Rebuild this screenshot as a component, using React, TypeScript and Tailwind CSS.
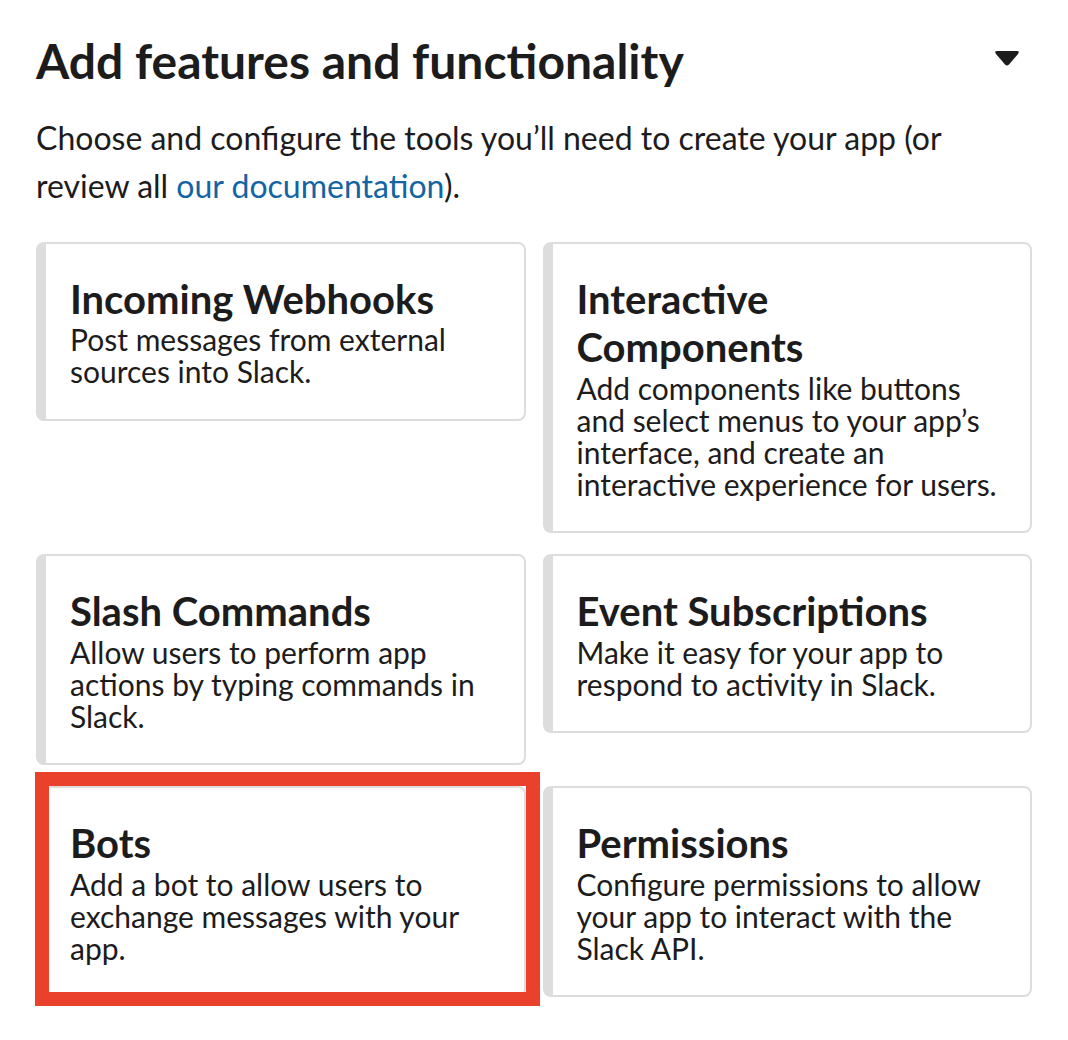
import React from "react";

type Card = { title: string[]; desc: string; boxed?: boolean };

const cards: Card[] = [
  { title: ["Incoming Webhooks"], desc: "Post messages from external sources into Slack." },
  {
    title: ["Interactive", "Components"],
    desc: "Add components like buttons and select menus to your app’s interface, and create an interactive experience for users.",
  },
  { title: ["Slash Commands"], desc: "Allow users to perform app actions by typing commands in Slack." },
  { title: ["Event Subscriptions"], desc: "Make it easy for your app to respond to activity in Slack." },
  { title: ["Bots"], desc: "Add a bot to allow users to exchange messages with your app.", boxed: true },
  { title: ["Permissions"], desc: "Configure permissions to allow your app to interact with the Slack API." },
];

function FeatureCard({ card }: { card: Card }) {
  return (
    <div className="relative rounded-[8px] border-2 border-l-[10px] border-[#dddddd] bg-white pl-[24px] pr-[24px] pt-[31px] pb-[31.5px]">
      <div className="text-[40px] font-bold leading-[48.5px] text-[#1d1c1d]">
        {card.title.map((t) => (
          <div key={t}>{t}</div>
        ))}
      </div>
      <p className="text-[30px] leading-[32px] text-[#1d1c1d]">{card.desc}</p>
      {card.boxed && (
        <div className="pointer-events-none absolute left-[-11px] top-[-16px] right-[-16px] bottom-[-11px] border-[14px] border-[#e9412b]" />
      )}
    </div>
  );
}

export default function App() {
  return (
    <div
      className="min-h-[1040px] w-[1068px] bg-white pl-[36px] pt-[32px]"
      style={{ fontFamily: "Lato, 'Noto Sans', sans-serif" }}
    >
      <div className="w-[996px]">
        <div className="flex items-start justify-between pr-[12px]">
          <h1 className="text-[48px] font-bold leading-[1.2] text-[#1d1c1d]">Add features and functionality</h1>
          <svg className="mt-[18px]" width="26" height="16" viewBox="0 0 26 16">
            <path d="M3 1 H23 Q26 1 24 4 L15 14.5 Q13 16.5 11 14.5 L2 4 Q0 1 3 1 Z" fill="#1d1c1d" />
          </svg>
        </div>
        <p className="mt-[24px] text-[32px] leading-[48px] text-[#1d1c1d]">
          Choose and configure the tools you’ll need to create your app (or review all{" "}
          <span className="text-[#1264a3]">our documentation</span>).
        </p>
        <div className="mt-[32px] grid grid-cols-2 items-start gap-x-[17px] gap-y-[21px]">
          {cards.map((c) => (
            <FeatureCard key={c.title.join(" ")} card={c} />
          ))}
        </div>
      </div>
    </div>
  );
}
